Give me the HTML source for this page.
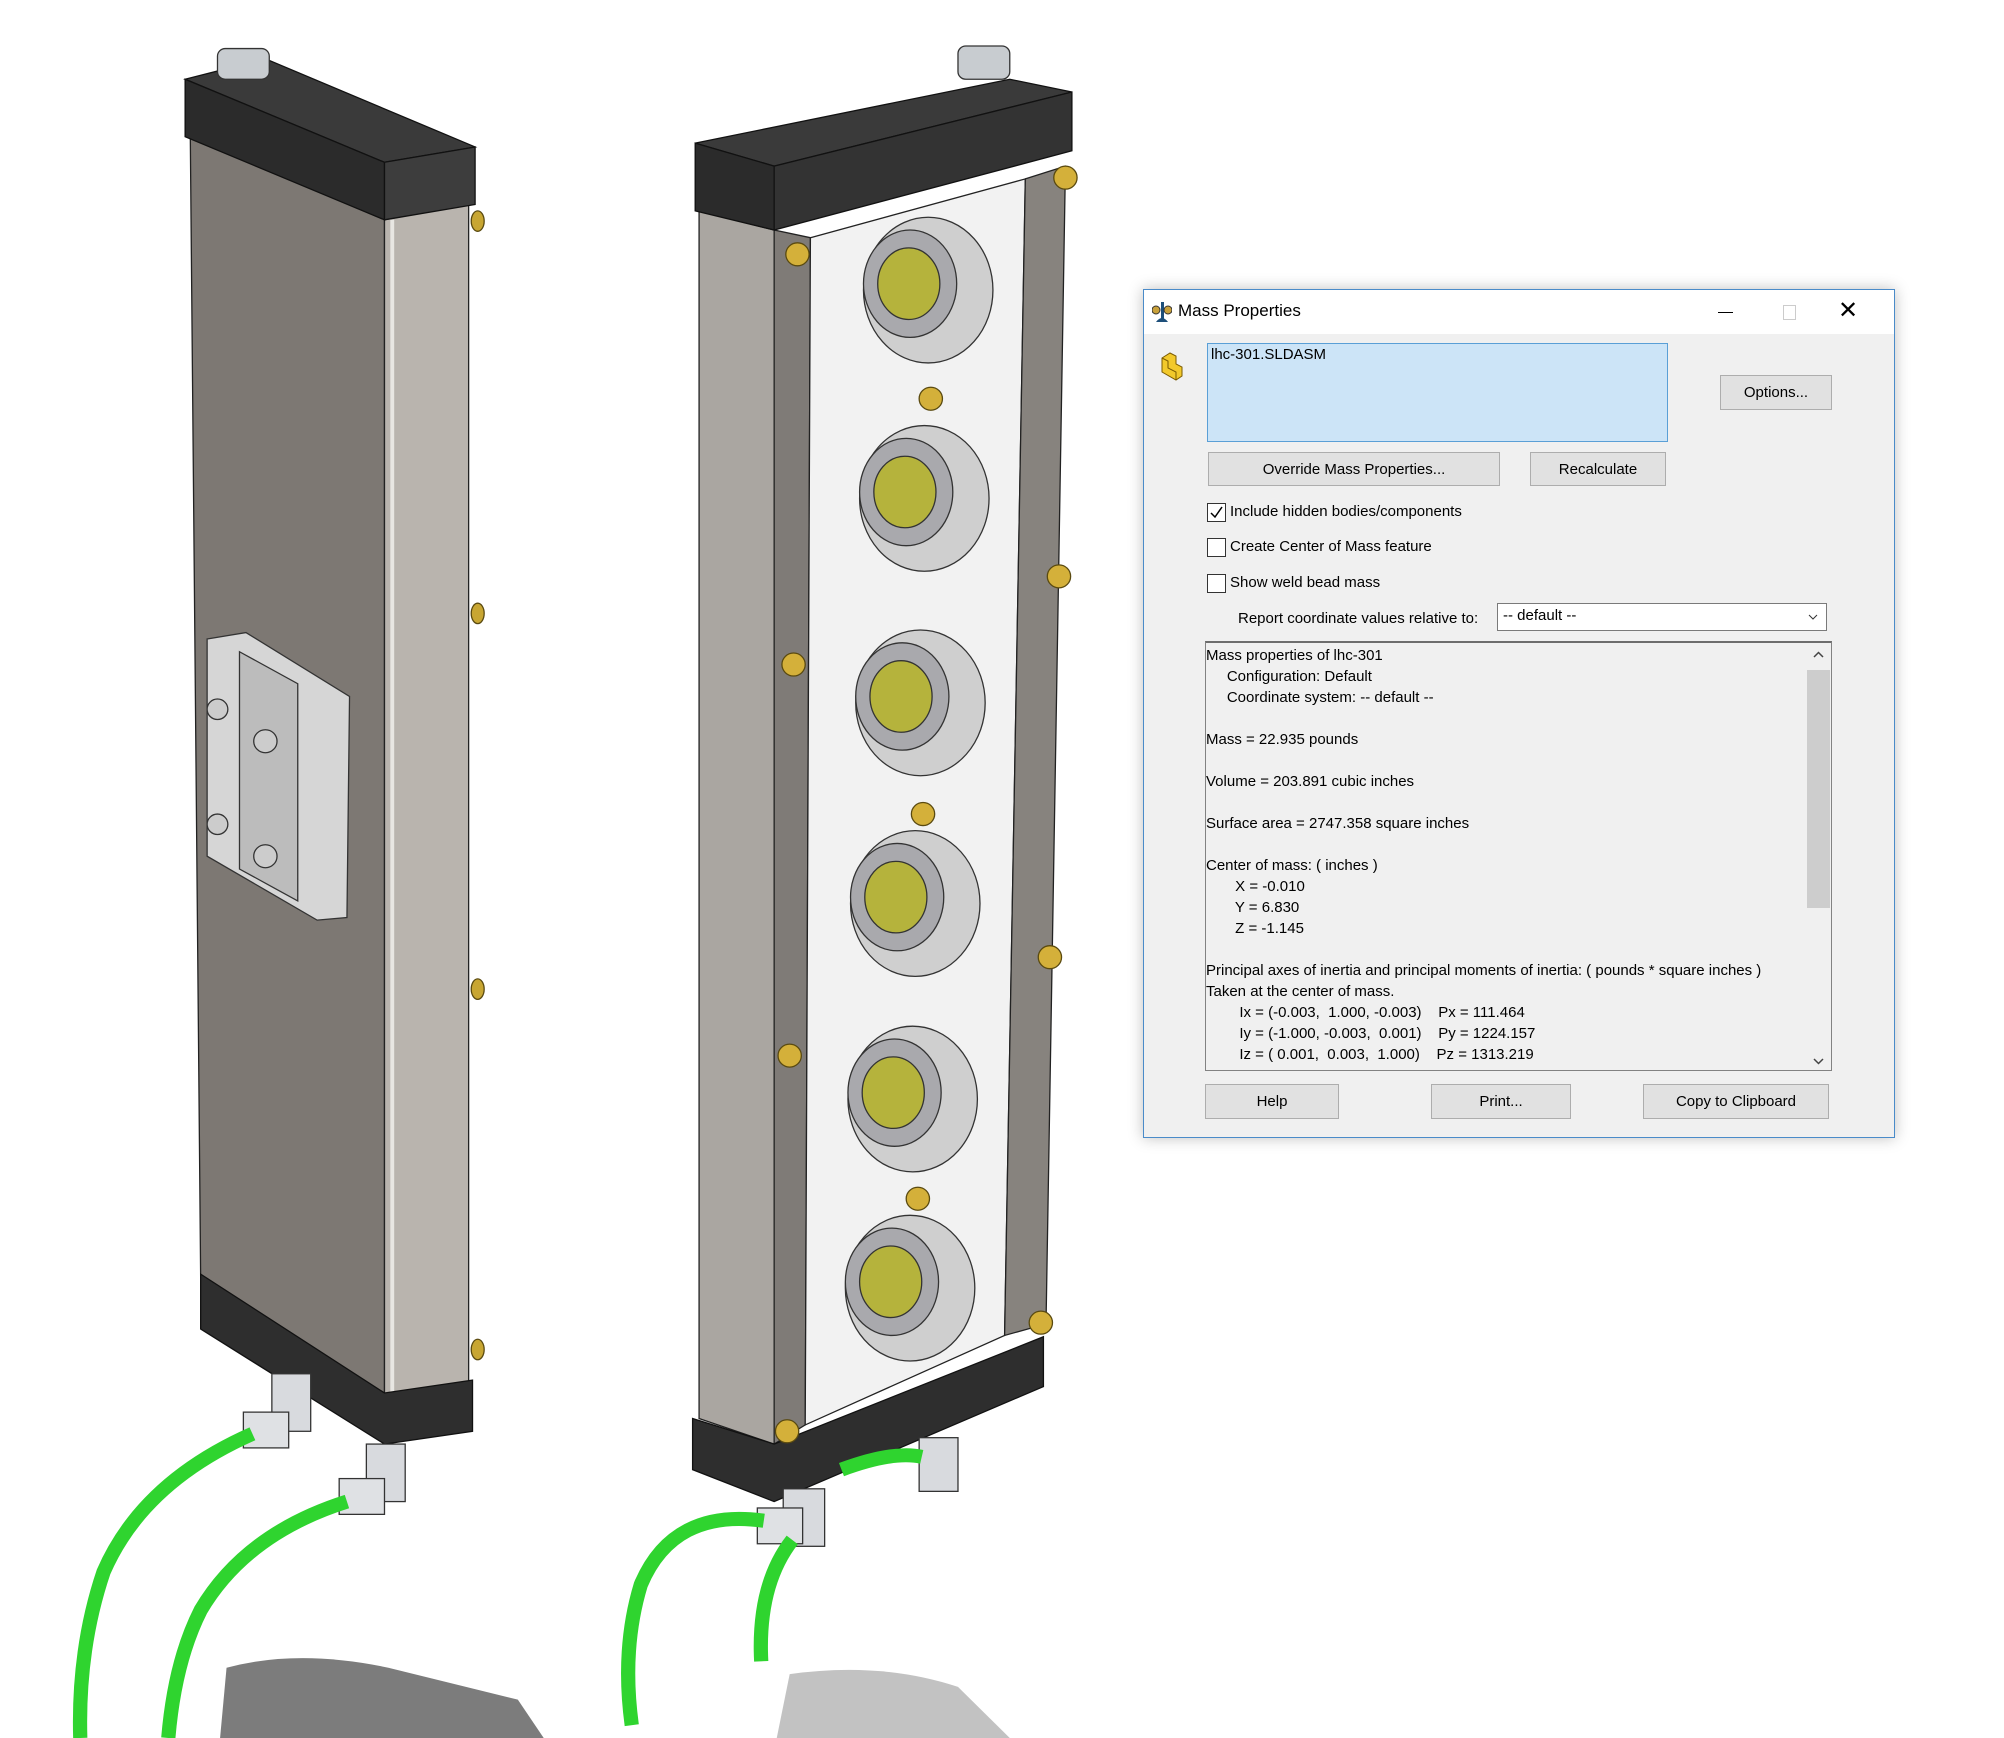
<!DOCTYPE html>
<html><head><meta charset="utf-8"><style>
html,body{margin:0;padding:0;background:#fff;}
body{width:2004px;height:1738px;position:relative;overflow:hidden;font-family:"Liberation Sans",sans-serif;}
svg.art{position:absolute;left:0;top:0;}
.dlg{position:absolute;left:1143px;top:289px;width:750px;height:847px;background:#f0f0f0;border:1px solid #4a8bc9;box-shadow:0 0 14px rgba(0,0,0,0.25);}
.tb{position:absolute;left:0;top:0;width:750px;height:44px;background:#fff;}
.ab{position:absolute;font-size:15px;color:#000;white-space:nowrap;}
.btn{position:absolute;background:#e1e1e1;border:1px solid #adadad;box-sizing:border-box;font-size:15px;text-align:center;display:flex;align-items:center;justify-content:center;}
.cb{position:absolute;width:19px;height:19px;border:1px solid #333;background:#fff;box-sizing:border-box;}
.ta{position:absolute;left:61px;top:351px;width:627px;height:430px;border:1px solid #828282;border-top:2px solid #6d6d6d;box-sizing:border-box;background:#f0f0f0;overflow:hidden;}
.ta .l{font-size:15px;line-height:21px;height:21px;white-space:pre;}
</style></head><body>
<svg class="art" width="2004" height="1738" viewBox="0 0 1548 1360" preserveAspectRatio="none">
<path d="M175 1305 Q230 1290 300 1305 L400 1330 L420 1360 L170 1360 Z" fill="#444" opacity="0.7"/>
<path d="M610 1310 Q680 1300 740 1320 L780 1360 L600 1360 Z" fill="#777" opacity="0.45"/>
<polygon points="147,107 297,172 297,1095 155,1000" fill="#7d7873" stroke="#222" stroke-width="1"/>
<polygon points="297,172 362,160 362,1082 297,1095" fill="#b9b4ae" stroke="#222" stroke-width="1"/>
<line x1="303" y1="172" x2="303" y2="1094" stroke="#e8e6e2" stroke-width="3"/>
<polygon points="143,62 205,46 367,115 297,127" fill="#3a3a3a" stroke="#111"/>
<polygon points="143,62 297,127 297,172 143,107" fill="#2b2b2b" stroke="#111"/>
<polygon points="297,127 367,115 367,160 297,172" fill="#3d3d3d" stroke="#111"/>
<polygon points="155,997 297,1090 365,1080 365,1120 297,1130 155,1040" fill="#2e2e2e" stroke="#111"/>
<rect x="168" y="38" width="40" height="24" rx="6" fill="#c8ccd0" stroke="#333"/>
<polygon points="160,500 190,495 270,545 268,718 245,720 160,670" fill="#d6d6d6" stroke="#333"/>
<polygon points="185,510 230,535 230,705 185,680" fill="#bcbcbc" stroke="#333"/>
<circle cx="168" cy="555" r="8" fill="#ccc" stroke="#333"/><circle cx="168" cy="645" r="8" fill="#ccc" stroke="#333"/>
<circle cx="205" cy="580" r="9" fill="#ccc" stroke="#333"/><circle cx="205" cy="670" r="9" fill="#ccc" stroke="#333"/>
<g fill="#c8a632" stroke="#5a4a10"><ellipse cx="369" cy="173" rx="5" ry="8"/><ellipse cx="369" cy="480" rx="5" ry="8"/><ellipse cx="369" cy="774" rx="5" ry="8"/><ellipse cx="369" cy="1056" rx="5" ry="8"/></g>
<rect x="210" y="1075" width="30" height="45" fill="#d8dade" stroke="#333"/>
<rect x="283" y="1130" width="30" height="45" fill="#d8dade" stroke="#333"/>
<rect x="188" y="1105" width="35" height="28" fill="#dfe1e4" stroke="#333"/>
<rect x="262" y="1157" width="35" height="28" fill="#dfe1e4" stroke="#333"/>
<path d="M195 1122 Q110 1160 80 1230 Q60 1290 62 1360" fill="none" stroke="#2fd42f" stroke-width="11"/>
<path d="M268 1175 Q190 1200 155 1260 Q135 1300 130 1360" fill="none" stroke="#2fd42f" stroke-width="11"/>
<polygon points="540,165 598,180 598,1130 540,1110" fill="#aaa6a1" stroke="#222"/>
<polygon points="598,180 626,186 622,1115 598,1130" fill="#7f7b77" stroke="#222"/>
<polygon points="626,186 792,140 776,1045 622,1115" fill="#f2f2f2" stroke="#222"/>
<polygon points="792,140 823,130 808,1036 776,1045" fill="#87837e" stroke="#222"/>
<polygon points="537,112 780,62 828,72 598,130" fill="#3a3a3a" stroke="#111"/>
<polygon points="537,112 598,130 598,180 537,165" fill="#2b2b2b" stroke="#111"/>
<polygon points="598,130 828,72 828,118 598,180" fill="#333" stroke="#111"/>
<polygon points="535,1110 598,1130 806,1046 806,1085 598,1175 535,1150" fill="#2e2e2e" stroke="#111"/>
<rect x="740" y="36" width="40" height="26" rx="6" fill="#c8ccd0" stroke="#333"/>
<g stroke="#333" stroke-width="1">
<g><ellipse cx="717" cy="227" rx="50" ry="57" fill="#cfcfcf"/><ellipse cx="703" cy="222" rx="36" ry="42" fill="#a9a9ad"/><ellipse cx="702" cy="222" rx="24" ry="28" fill="#b5b33c"/></g>
<g><ellipse cx="714" cy="390" rx="50" ry="57" fill="#cfcfcf"/><ellipse cx="700" cy="385" rx="36" ry="42" fill="#a9a9ad"/><ellipse cx="699" cy="385" rx="24" ry="28" fill="#b5b33c"/></g>
<g><ellipse cx="711" cy="550" rx="50" ry="57" fill="#cfcfcf"/><ellipse cx="697" cy="545" rx="36" ry="42" fill="#a9a9ad"/><ellipse cx="696" cy="545" rx="24" ry="28" fill="#b5b33c"/></g>
<g><ellipse cx="707" cy="707" rx="50" ry="57" fill="#cfcfcf"/><ellipse cx="693" cy="702" rx="36" ry="42" fill="#a9a9ad"/><ellipse cx="692" cy="702" rx="24" ry="28" fill="#b5b33c"/></g>
<g><ellipse cx="705" cy="860" rx="50" ry="57" fill="#cfcfcf"/><ellipse cx="691" cy="855" rx="36" ry="42" fill="#a9a9ad"/><ellipse cx="690" cy="855" rx="24" ry="28" fill="#b5b33c"/></g>
<g><ellipse cx="703" cy="1008" rx="50" ry="57" fill="#cfcfcf"/><ellipse cx="689" cy="1003" rx="36" ry="42" fill="#a9a9ad"/><ellipse cx="688" cy="1003" rx="24" ry="28" fill="#b5b33c"/></g>
</g>
<g fill="#d4b03a" stroke="#5a4a10"><circle cx="616" cy="199" r="9"/><circle cx="719" cy="312" r="9"/><circle cx="613" cy="520" r="9"/><circle cx="713" cy="637" r="9"/><circle cx="610" cy="826" r="9"/><circle cx="709" cy="938" r="9"/><circle cx="608" cy="1120" r="9"/><circle cx="823" cy="139" r="9"/><circle cx="818" cy="451" r="9"/><circle cx="811" cy="749" r="9"/><circle cx="804" cy="1035" r="9"/></g>
<rect x="605" y="1165" width="32" height="45" fill="#d8dade" stroke="#333"/>
<rect x="585" y="1180" width="35" height="28" fill="#dfe1e4" stroke="#333"/>
<rect x="710" y="1125" width="30" height="42" fill="#d8dade" stroke="#333"/>
<path d="M590 1190 Q520 1180 495 1240 Q480 1290 488 1350" fill="none" stroke="#2fd42f" stroke-width="11"/>
<path d="M612 1205 Q585 1240 588 1300" fill="none" stroke="#2fd42f" stroke-width="11"/>
<path d="M650 1150 Q690 1135 712 1140" fill="none" stroke="#2fd42f" stroke-width="11"/>
</svg>

<div class="dlg">
 <div class="tb">
  <svg style="position:absolute;left:8px;top:10px" width="20" height="24" viewBox="0 0 20 24"><rect x="9" y="2" width="3" height="18" fill="#1d4f7a"/><path d="M4 22 Q10 14 16 22Z" fill="#1d4f7a"/><circle cx="4" cy="10" r="4" fill="#c9a13a" stroke="#333"/><circle cx="16" cy="10" r="4" fill="#c9a13a" stroke="#333"/></svg>
  <div class="ab" style="left:34px;top:11px;font-size:17px;">Mass Properties</div>
  <div style="position:absolute;left:574px;top:22px;width:15px;height:1px;background:#000"></div>
  <div style="position:absolute;left:639px;top:15px;width:11px;height:13px;border:1px solid #ccc"></div>
  <div class="ab" style="left:694px;top:6px;font-size:24px;">✕</div>
 </div>
 <svg style="position:absolute;left:14px;top:60px" width="28" height="32" viewBox="0 0 28 32"><path d="M4 8 L12 3 L18 6 L18 14 L24 17 L24 26 L18 30 L4 22Z" fill="#f2c92c" stroke="#7a5a00"/><path d="M4 8 L10 11 L10 18 L18 22 L18 30" fill="none" stroke="#7a5a00"/></svg>
 <div style="position:absolute;left:63px;top:53px;width:461px;height:99px;background:#cce4f7;border:1px solid #5a9fd6;box-sizing:border-box;"><div class="ab" style="left:3px;top:2px;">lhc-301.SLDASM</div></div>
 <div class="btn" style="left:576px;top:85px;width:112px;height:35px;">Options...</div>
 <div class="btn" style="left:64px;top:162px;width:292px;height:34px;">Override Mass Properties...</div>
 <div class="btn" style="left:386px;top:162px;width:136px;height:34px;">Recalculate</div>
 <div class="cb" style="left:63px;top:213px;"><svg width="17" height="17" viewBox="0 0 17 17"><path d="M3 9 L7 13 L14 3" fill="none" stroke="#000" stroke-width="1.5"/></svg></div>
 <div class="ab" style="left:86px;top:213px;">Include hidden bodies/components</div>
 <div class="cb" style="left:63px;top:248px;"></div>
 <div class="ab" style="left:86px;top:248px;">Create Center of Mass feature</div>
 <div class="cb" style="left:63px;top:284px;"></div>
 <div class="ab" style="left:86px;top:284px;">Show weld bead mass</div>
 <div class="ab" style="left:94px;top:320px;">Report coordinate values relative to:</div>
 <div style="position:absolute;left:353px;top:313px;width:330px;height:28px;background:#fff;border:1px solid #7a7a7a;box-sizing:border-box;"><div class="ab" style="left:5px;top:3px;">-- default --</div><svg style="position:absolute;right:8px;top:9px" width="10" height="8"><path d="M1 2 L5 6 L9 2" fill="none" stroke="#333"/></svg></div>
 <div class="ta">
  <div style="position:absolute;left:0;top:2px;width:600px;"><div class="l">Mass properties of lhc-301</div><div class="l">     Configuration: Default</div><div class="l">     Coordinate system: -- default --</div><div class="l"> </div><div class="l">Mass = 22.935 pounds</div><div class="l"> </div><div class="l">Volume = 203.891 cubic inches</div><div class="l"> </div><div class="l">Surface area = 2747.358 square inches</div><div class="l"> </div><div class="l">Center of mass: ( inches )</div><div class="l">       X = -0.010</div><div class="l">       Y = 6.830</div><div class="l">       Z = -1.145</div><div class="l"> </div><div class="l">Principal axes of inertia and principal moments of inertia: ( pounds * square inches )</div><div class="l">Taken at the center of mass.</div><div class="l">        Ix = (-0.003,  1.000, -0.003)    Px = 111.464</div><div class="l">        Iy = (-1.000, -0.003,  0.001)    Py = 1224.157</div><div class="l">        Iz = ( 0.001,  0.003,  1.000)    Pz = 1313.219</div></div>
  <div style="position:absolute;right:0;top:0;width:25px;height:428px;background:#f0f0f0;"></div>
  <div style="position:absolute;right:1px;top:27px;width:23px;height:238px;background:#cdcdcd;"></div>
  <svg style="position:absolute;right:7px;top:8px" width="11" height="8"><path d="M1 6 L5.5 1.5 L10 6" fill="none" stroke="#444" stroke-width="1.5"/></svg>
  <svg style="position:absolute;right:7px;top:414px" width="11" height="8"><path d="M1 2 L5.5 6.5 L10 2" fill="none" stroke="#444" stroke-width="1.5"/></svg>
 </div>
 <div class="btn" style="left:61px;top:794px;width:134px;height:35px;">Help</div>
 <div class="btn" style="left:287px;top:794px;width:140px;height:35px;">Print...</div>
 <div class="btn" style="left:499px;top:794px;width:186px;height:35px;">Copy to Clipboard</div>
</div>
</body></html>
